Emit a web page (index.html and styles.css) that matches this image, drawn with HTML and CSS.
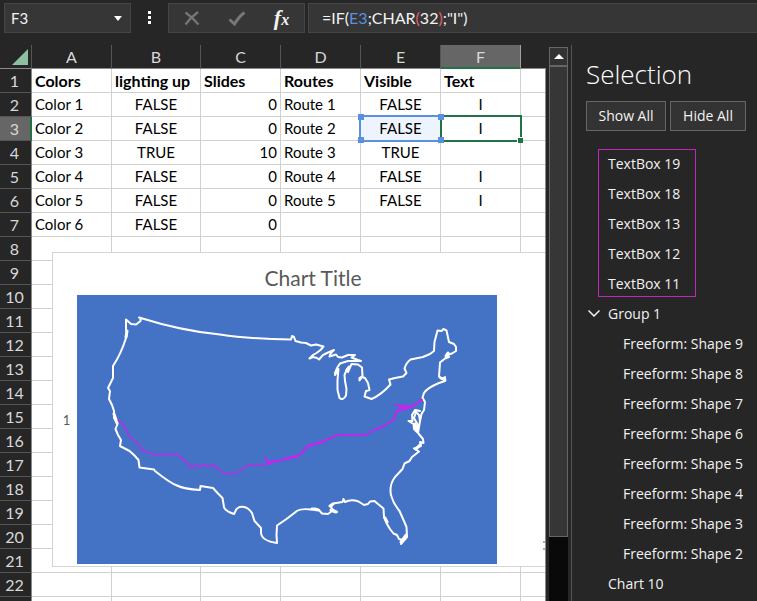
FILE: index.html
```html
<!DOCTYPE html>
<html lang="en">
<head>
<meta charset="utf-8">
<title>Workbook</title>
<link rel="stylesheet" href="styles.css">
</head>
<body>
<header class="formula-bar">
  <div class="name-box">
    <input class="name-input" type="text" value="F3" aria-label="Name box">
    <button class="name-toggle" type="button" aria-label="Named ranges"><svg width="8" height="5" viewBox="0 0 8 5"><path d="M0 0h8L4 5z" fill="#fff"/></svg></button>
  </div>
  <svg class="grip" width="4" height="14" viewBox="0 0 4 14" aria-hidden="true"><path d="M0 0h3v3H0zM0 5h3v3H0zM0 10h3v3H0z" fill="#fff"/></svg>
  <div class="entry-tools">
    <button class="tool" type="button" aria-label="Cancel"><svg width="16" height="15" viewBox="0 0 16 15"><path d="M1.500 1.500Q8 6 14.500 13.500M14 1Q7 6 1.500 13.500" fill="none" stroke="#777" stroke-width="2.200"/></svg></button>
    <button class="tool" type="button" aria-label="Enter"><svg width="18" height="15" viewBox="0 0 18 15"><path d="M1.500 8.500L6.500 13Q11 5.500 16.500 1.500" fill="none" stroke="#777" stroke-width="3"/></svg></button>
    <button class="tool fx" type="button" aria-label="Insert function">f<span class="fx-x">x</span></button>
  </div>
  <div class="formula" role="textbox" aria-label="Formula bar" contenteditable="true" spellcheck="false">=IF(<span class="ref">E3</span>;CHAR<span class="paren">(</span>32<span class="paren">)</span>;"I")</div>
</header>
<div class="workspace">
  <main class="sheet">
    <table class="cells">
      <colgroup><col class="c-head"><col class="c-std"><col class="c-wide"><col class="c-std"><col class="c-std"><col class="c-std"><col class="c-std"><col class="c-std"></colgroup>
      <thead><tr><th class="corner"><svg width="16" height="16" viewBox="0 0 16 16" aria-hidden="true"><path d="M16 0v16H0z" fill="#8bc0a0"/></svg></th><th>A</th><th>B</th><th>C</th><th>D</th><th>E</th><th class="col-active">F</th><th></th></tr></thead>
      <tbody>
        <tr class="titles"><th>1</th><td>Colors</td><td>lighting up</td><td>Slides</td><td>Routes</td><td>Visible</td><td>Text</td><td></td></tr>
        <tr><th>2</th><td>Color 1</td><td class="mid">FALSE</td><td class="num">0</td><td>Route 1</td><td class="mid">FALSE</td><td class="mid">I</td><td></td></tr>
        <tr><th class="row-active">3</th><td>Color 2</td><td class="mid">FALSE</td><td class="num">0</td><td>Route 2</td><td class="mid precedent">FALSE<span class="ref-frame"><i></i><i></i><i></i><i></i></span></td><td class="mid active">I<span class="active-frame"><i></i></span></td><td></td></tr>
        <tr><th>4</th><td>Color 3</td><td class="mid">TRUE</td><td class="num">10</td><td>Route 3</td><td class="mid">TRUE</td><td></td><td></td></tr>
        <tr><th>5</th><td>Color 4</td><td class="mid">FALSE</td><td class="num">0</td><td>Route 4</td><td class="mid">FALSE</td><td class="mid">I</td><td></td></tr>
        <tr><th>6</th><td>Color 5</td><td class="mid">FALSE</td><td class="num">0</td><td>Route 5</td><td class="mid">FALSE</td><td class="mid">I</td><td></td></tr>
        <tr><th>7</th><td>Color 6</td><td class="mid">FALSE</td><td class="num">0</td><td></td><td></td><td></td><td></td></tr>
        <tr><th>8</th><td></td><td></td><td></td><td></td><td></td><td></td><td></td></tr>
        <tr><th>9</th><td></td><td></td><td></td><td></td><td></td><td></td><td></td></tr>
        <tr><th>10</th><td></td><td></td><td></td><td></td><td></td><td></td><td></td></tr>
        <tr><th>11</th><td></td><td></td><td></td><td></td><td></td><td></td><td></td></tr>
        <tr><th>12</th><td></td><td></td><td></td><td></td><td></td><td></td><td></td></tr>
        <tr><th>13</th><td></td><td></td><td></td><td></td><td></td><td></td><td></td></tr>
        <tr><th>14</th><td></td><td></td><td></td><td></td><td></td><td></td><td></td></tr>
        <tr><th>15</th><td></td><td></td><td></td><td></td><td></td><td></td><td></td></tr>
        <tr><th>16</th><td></td><td></td><td></td><td></td><td></td><td></td><td></td></tr>
        <tr><th>17</th><td></td><td></td><td></td><td></td><td></td><td></td><td></td></tr>
        <tr><th>18</th><td></td><td></td><td></td><td></td><td></td><td></td><td></td></tr>
        <tr><th>19</th><td></td><td></td><td></td><td></td><td></td><td></td><td></td></tr>
        <tr><th>20</th><td></td><td></td><td></td><td></td><td></td><td></td><td></td></tr>
        <tr><th>21</th><td></td><td></td><td></td><td></td><td></td><td></td><td></td></tr>
        <tr><th>22</th><td></td><td></td><td></td><td></td><td></td><td></td><td></td></tr>
        <tr><th></th><td></td><td></td><td></td><td></td><td></td><td></td><td></td></tr>
      </tbody>
    </table>
    <figure class="chart">
      <figcaption class="chart-title">Chart Title</figcaption>
      <div class="chart-body">
        <span class="axis-label">1</span>
        <svg class="plot" width="420" height="269" viewBox="77 295 420 269" role="img" aria-label="Map of the United States with a coast to coast route">
          <rect x="77" y="295" width="420" height="269" fill="#4472c4"/>
          <g fill="none" stroke-linejoin="round" stroke-linecap="round">
            <path stroke="#fff" stroke-width="2" d="M139 317.500Q182 331 220 334.500Q250 339 291 339.500L292 336L294 337L295.500 341L301 342.500L306 343L311 345.500L316 344.500L323.500 346.500L320.500 350L316.500 353L313 355L309.500 358.500L313 357L317 358L319 359.500L323 355L327 353L334 350L331 353L329.500 356.500L336 354.500L338 357L342 357.500L348 355L355 355L351.500 357.500L358 360L361 361L348 361L340 363.500L337 368L335 375L338.500 369L337.500 380L337.500 390L339.500 398Q343 401 346 395.500L346.500 389L345 381L344.500 375L347 369L350 367L348 372L351.500 364L358 364.500L362 367.500L362.500 376L359.500 378L359.500 380.500L362 377L365 378L368 383L369.500 390L366 391L364.500 396.500L371.500 399Q381 395 390.500 384.500L389 379.500L395 378L403 376.500L406.500 373L404.500 368.500Q406 363 410.500 359.500L423 357L430 354L434 351L434.500 342L437.500 330.500L441.500 331L443.500 329L446.500 330.500L449 342L454 344L456 347V351L452 353.500L447 355L449 357L445 358.500L440 362.500L439 376.500L442 379L445 377V381L439 383Q427 388 424 393L422.500 397.500L425 402L424 410L421.500 414L420 421L418 433L423 439L423.500 443L420 442L421 446L414 448.500L419 451.500L412 457L409.500 461L404.500 463.500L402.500 469L395 477Q389 485 391 495Q393 503 399.500 511Q404 521 406.500 527L407 537L401 544L403 540L399 539L397 535L393.500 533.500L390 529L387 524L384 517L383.500 508.500L378 504L374.500 501L370 501.500L368 504L364 505L358.500 501.500Q351 499 345 502L343.500 499L342.500 502L333 503.500L331 507L333 510L337 512L332 511L328 514L322 513.500L319 510L315 508.500L311 509.500Q299 508 295 512.500Q287 519 277 525.500L276.500 535L277 543Q262 541 261 533V528L254.500 521L252 513Q247 505.500 239.500 507L236.500 509L234 514Q225 511 224 507L222.500 498L218 493.500L213 488L200.500 486L200 490Q184 489 177 485.500Q170 483 155 471L154 469.500L139.500 467.500L138.500 460L134 455L129.500 451L120 446L121 440L118 435L115.500 429L117.500 424L114 418V411L112 405L109 399L110 391L108 388L113 378V366Q121 354 126 338L127 333L126 330V319.500L131 324L136 324.500L140.500 321V318Z"/>
            <path stroke="#fff" stroke-width="2" d="M420 411L415 410L412 415L412.500 421L408.500 421L413.500 424L414 429L417 432L418 425L414 418L416 412L419 415L420 421"/>
            <path stroke="#fff" stroke-width="3" d="M337 370L335.500 373M349 367L347 370M446 356L448 353M441 378L445 380M415 424L417 431M416 449L420 445M312 509L318 510M330 506L333 504M331 510L336 512M385 518L387 522M401 542L406 535M127 331L126 337M114 414L117 423"/>
            <path stroke="#a33ae0" stroke-width="2" d="M118.500 420.500L123 424L127.500 433L133 440L140 445L140.500 450L146 451.500L154 454.500L178 454.500L185 461L192 468L196 465L200 466.500L203 465L208 466L214 465L220 471Q230 477 239 471.500L248 465L267 464.500L272 462"/>
            <path stroke="#bd29e8" stroke-width="2" d="M265.500 457L268 464L273 461L283 460L300 455L307 446.500L323 441.500L338 435L365 435L374 430L384 426L393 420.500L397 411L404 409L408 407L395 405"/>
            <path stroke="#d020f0" stroke-width="2" d="M268 462L278 461M286 458L297 457M308 446L323 442M397 411L411 407L422 400M400 407L414 406"/>
          </g>
        </svg>
        <svg class="legend-mark" width="3" height="9" viewBox="0 0 3 9" aria-hidden="true"><path d="M0 1h3M0 8h3" stroke="#595959"/></svg>
      </div>
    </figure>
  </main>
  <div class="scrollbar">
    <button class="scroll-up" type="button" aria-label="Scroll up"><svg width="10" height="5" viewBox="0 0 10 5"><path d="M0 5h10L5 0z" fill="#fff"/></svg></button>
    <div class="scroll-thumb"></div>
  </div>
  <aside class="pane">
    <h1 class="pane-title">Selection</h1>
    <div class="pane-actions"><button class="action" type="button">Show All</button><button class="action" type="button">Hide All</button></div>
    <ul class="objects marked"><li>TextBox 19</li><li>TextBox 18</li><li>TextBox 13</li><li>TextBox 12</li><li>TextBox 11</li></ul>
    <ul class="objects">
      <li class="group"><svg class="chevron" width="12" height="7" viewBox="0 0 12 7" aria-hidden="true"><path d="M.5.500L6 6L11.500.500" fill="none" stroke="#f2f2f2" stroke-width="1.500"/></svg>Group 1
        <ul class="objects children"><li>Freeform: Shape 9</li><li>Freeform: Shape 8</li><li>Freeform: Shape 7</li><li>Freeform: Shape 6</li><li>Freeform: Shape 5</li><li>Freeform: Shape 4</li><li>Freeform: Shape 3</li><li>Freeform: Shape 2</li></ul>
      </li>
      <li>Chart 10</li>
    </ul>
  </aside>
</div>
</body>
</html>
```
FILE: styles.css
```css
* { box-sizing: border-box; }
body {
  margin: 0;
  height: 100vh;
  overflow: hidden;
  display: flex;
  flex-direction: column;
  background: #262626;
  color: #f2f2f2;
  font-family: "Open Sans", "Noto Sans", sans-serif;
  font-size: 14px;
}
button { font: inherit; color: inherit; padding: 0; border: 0; background: none; }

.formula-bar {
  display: flex;
  align-items: center;
  flex: none;
  height: 45px;
  padding: 3px 0 12px 4px;
}
.name-box, .entry-tools, .formula {
  height: 30px;
  background: #363636;
  border: 1px solid #464646;
}
.name-box { display: flex; width: 127px; }
.name-input {
  flex: 1;
  min-width: 0;
  padding: 0 6px;
  border: 0;
  background: none;
  color: inherit;
  font: 15px Lato, sans-serif;
}
.name-toggle { display: grid; place-items: center; width: 24px; }
.grip { flex: none; margin: 0 16px 0 17px; }
.entry-tools { display: flex; width: 137px; margin-right: 3px; }
.tool { display: grid; place-items: center; flex: 1; }
.fx {
  display: flex;
  align-items: center;
  justify-content: center;
  font: italic bold 22px/26px "Liberation Serif", serif;
}
.fx-x { font-size: 16px; padding-top: 4px; }
.formula {
  flex: 1;
  padding: 0 13px;
  border-right: 0;
  font: 16px/28px Lato, sans-serif;
  white-space: nowrap;
}
.ref { color: #5b8fe0; }
.paren { color: #e0606a; }

.workspace { flex: 1; min-height: 0; display: flex; }
.sheet {
  position: relative;
  flex: 1;
  min-width: 0;
  overflow: hidden;
}
.sheet::after {
  content: "";
  position: absolute;
  inset: 24px 0 0 auto;
  width: 1px;
  background: #8a8a8a;
}
.cells {
  width: 601px;
  table-layout: fixed;
  border-collapse: separate;
  border-spacing: 0;
  font: 15px/23px Lato, sans-serif;
  color: #000;
}
.c-head { width: 32px; }
.c-std { width: 80px; }
.c-wide { width: 89px; }
.cells th, .cells td { height: 24px; padding: 0; white-space: nowrap; }
.cells td {
  background: #fff;
  border-right: 1px solid #d0d0d0;
  border-bottom: 1px solid #d0d0d0;
  padding: 0 3px;
}
.cells th {
  background: #262626;
  color: #d8d8d8;
  font-size: 16px;
  font-weight: 400;
  border-right: 1px solid #555;
  border-bottom: 1px solid #555;
}
.cells tbody th { padding-right: 2px; border-right-color: #8a8a8a; }
.cells thead th { border-bottom-color: #8a8a8a; }
.cells .corner { vertical-align: bottom; text-align: right; padding-right: 3px; }
.corner svg { display: block; margin: 0 0 3px auto; }
.cells .col-active { background: #666; border-right-color: #a0a0a0; box-shadow: inset 0 -1px #217346; border-bottom-color: #217346; }
.cells .row-active { background: #666; box-shadow: inset -1px 0 #217346; border-right-color: #217346; }
.titles td { font-size: 16px; font-weight: 700; }
.cells .mid { text-align: center; }
.cells .num { text-align: right; }
.cells .precedent { position: relative; background: #eef4fe; }
.cells .active { position: relative; }
.ref-frame, .active-frame { position: absolute; inset: -2px -1px -2px -2px; border: 2px solid #5b8fe0; }
.active-frame { inset: -2px -2px -2px -1px; border-color: #217346; }
.ref-frame { z-index: 1; border-right: 0; }
.ref-frame i, .active-frame i {
  position: absolute;
  width: 6px;
  height: 6px;
  background: #5b8fe0;
  border: 0 solid #fff;
}
.ref-frame i:nth-child(1) { left: -3px; top: -3px; }
.ref-frame i:nth-child(2) { right: -3px; top: -3px; }
.ref-frame i:nth-child(3) { left: -3px; bottom: -3px; }
.ref-frame i:nth-child(4) { right: -3px; bottom: -3px; }
.active-frame i { right: -3px; bottom: -3px; background: #217346; border-width: 1px 0 0 1px; }

.chart {
  position: absolute;
  left: 52px;
  top: 207px;
  width: 522px;
  margin: 0;
  padding-bottom: 2px;
  background: #fff;
  border: 1px solid #d4d4d4;
  font-family: Lato, sans-serif;
  color: #595959;
}
.chart-title { height: 42px; padding-top: 12px; text-align: center; font-size: 21px; line-height: 26px; }
.chart-body { display: flex; align-items: center; }
.axis-label { width: 24px; padding-left: 3px; text-align: center; font-size: 13px; line-height: 20px; margin-bottom: 20px; }
.plot { display: block; flex: none; }
.legend-mark { align-self: flex-end; margin: 0 0 14px 46px; }

.scrollbar {
  flex: none;
  width: 26px;
  display: flex;
  flex-direction: column;
  padding: 2px 3px 0;
  border-right: 1px solid #555;
}
.scroll-up {
  display: grid;
  place-items: center;
  height: 19px;
  flex: none;
  background: #333;
  border: 1px solid #666;
}
.scroll-thumb { flex: 1; margin-bottom: 64px; background: #363636; border: 1px solid #666; box-shadow: 0 64px #090909; }

.pane { flex: none; width: 185px; padding: 12px 0 0 14px; line-height: 30px; }
.pane-title { margin: 0 0 10px; font-size: 26px; font-weight: 300; line-height: 34px; color: #fff; }
.pane-actions { display: flex; gap: 4px; margin-bottom: 18px; }
.action { width: 80px; height: 30px; line-height: 28px; background: #333; border: 1px solid #666; }
.action + .action { width: 76px; }
.objects { list-style: none; margin: 0; padding: 0 0 0 22px; white-space: nowrap; }
.marked { width: 98px; height: 148px; margin: 0 0 2px 12px; padding-left: 9px; border: 1px solid #c026b8; }
.marked li { height: 30px; line-height: 28px; }
.children { padding-left: 15px; }
.chevron { float: left; margin: 11px 0 0 -20px; }
```
